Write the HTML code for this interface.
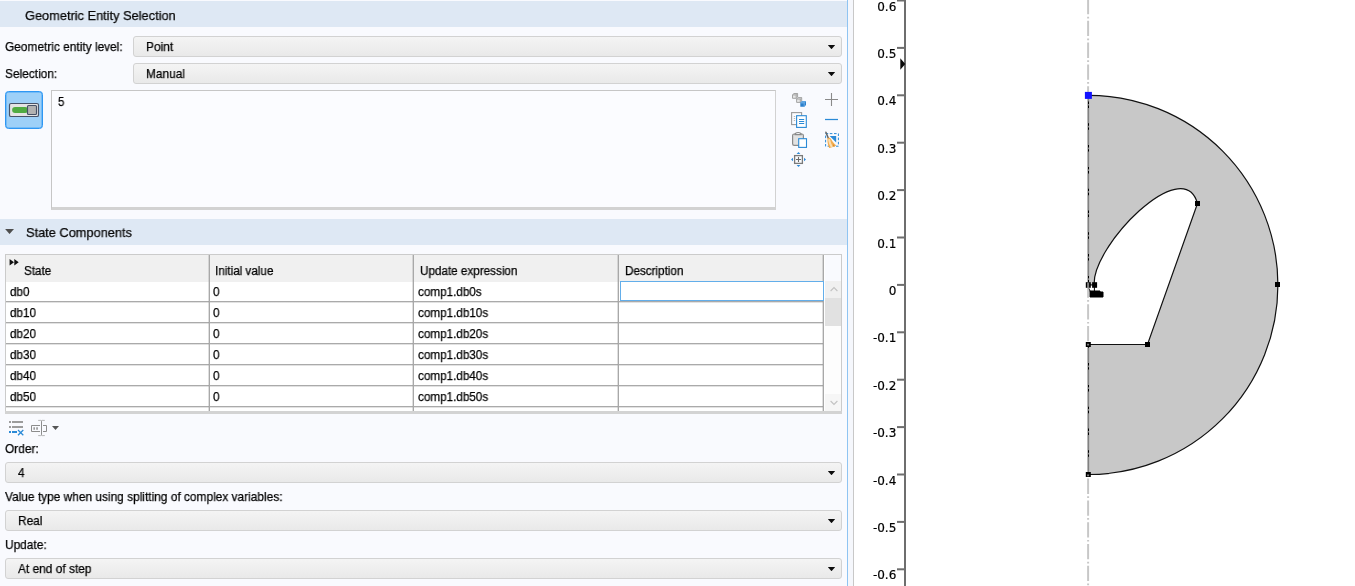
<!DOCTYPE html>
<html><head><meta charset="utf-8"><title>Settings</title>
<style>
*{box-sizing:border-box;margin:0;padding:0}
html,body{width:1355px;height:586px;overflow:hidden;background:#fff}
body{position:relative;font-family:"Liberation Sans",sans-serif;font-size:13px;color:#000}
.a{position:absolute}
.t{position:absolute;white-space:nowrap;transform:scaleX(.915);transform-origin:0 0;line-height:16px;will-change:transform;-webkit-text-stroke:.25px #000}
#left{position:absolute;left:0;top:0;width:847px;height:586px;background:#f9fafe}
.hdr{position:absolute;left:0;width:847px;height:26px;background:#dee8f4}
.hdr .t{font-size:13.4px;color:#0a0a0a;top:6.5px;transform:scaleX(.955)}
#tbl .t{font-size:12.3px;transform:scaleX(.95)}
.dd{position:absolute;height:21px;border:1px solid #d2d2d2;border-radius:3px;background:linear-gradient(#f4f4f4,#e9e9e9)}
.dd .t{top:2px;left:12px}
.dd i{position:absolute;right:5.8px;top:7.9px;width:7.4px;height:4.3px;background:#0c0c0c;clip-path:polygon(0 0,100% 0,50% 100%)}
</style></head><body>
<div id="left">
 <!-- section 1 -->
 <div class="hdr" style="top:1px"><span class="t" style="left:25px">Geometric Entity Selection</span></div>
 <span class="t" style="left:5px;top:39px">Geometric entity level:</span>
 <div class="dd" style="left:133px;top:36px;width:709px"><span class="t">Point</span><i></i></div>
 <span class="t" style="left:5px;top:66px">Selection:</span>
 <div class="dd" style="left:133px;top:63px;width:709px"><span class="t">Manual</span><i></i></div>

 <!-- toggle button -->
 <div class="a" id="tog" style="left:5px;top:91px;width:38px;height:38px;border:1px solid #2e97f3;border-radius:3.5px;background:#9dd0f8;box-shadow:inset 0 0 0 .5px #4aa6f5"></div>
 <svg class="a" style="left:5px;top:91px" width="38" height="38" viewBox="5 91 38 38">
  <rect x="9.5" y="103.5" width="29" height="13" rx="1.6" fill="#e4e4e4" stroke="#475268" stroke-width="1.15"/>
  <rect x="12.1" y="107" width="16" height="6" rx="3" fill="#50ab42"/>
  <rect x="27.5" y="105.5" width="9" height="9" rx="1" fill="#b2b2b2" stroke="#475268" stroke-width="1.15"/>
 </svg>
 <!-- list box -->
 <div class="a" style="left:51px;top:90px;width:725px;height:120px;background:#fbfcff;border:1px solid #c6c6c6;border-right-color:#d2d2d2;border-bottom:3px solid #d2d2d2"></div>
 <span class="t" style="left:58.3px;top:94.3px;font-size:12.4px">5</span>

<!-- icons -->
 <svg class="a" id="icons" style="left:786px;top:88px" width="60" height="84" viewBox="786 88 60 84">
  <!-- cubes -->
  <g fill="#e6e6e6" stroke="#a4a4a4" stroke-width="1">
   <path d="M792.5 94.8L794 93.5H797.6V97L796.2 98.3H792.5Z M792.5 94.9H796.2V98.3 M796.2 94.9L797.6 93.6"/>
   <path d="M796.6 98.9L798.1 97.6H801.7V101.1L800.3 102.4H796.6Z M796.6 99H800.3V102.4 M800.3 99L801.7 97.7"/>
  </g>
  <path d="M800.3 102.6L802.3 101H806V105L804.4 106.8H800.3Z" fill="#2b80cc"/><path d="M800.5 102.6L802.4 101.1H805.9L804.3 102.6Z" fill="#5ea6e4"/>
  <path d="M800.6 102.9H804.2V106.5 M804.2 102.9L805.8 101.3" fill="none" stroke="#7db8ea" stroke-width=".8"/>
  <!-- plus / minus -->
  <path d="M825 99.5H838M831.5 93V106" stroke="#8a8a8a" stroke-width="1.1" fill="none"/>
  <path d="M825 119.5H838" stroke="#2b8ad6" stroke-width="1.25" fill="none"/>
  <!-- copy -->
  <rect x="791.6" y="112.6" width="10" height="12" fill="#fbfcff" stroke="#9a9a9a" stroke-width="1.1"/>
  <path d="M793.8 116.5h1.4M793.8 118.5h1.4M793.8 120.5h1.4" stroke="#b8b8b8" stroke-width="1"/>
  <rect x="796.6" y="115.7" width="9.7" height="11.7" fill="#fff" stroke="#2b8ad6" stroke-width="1.1"/>
  <path d="M799 119.5h5.2M799 121.5h5.2M799 123.5h5.2" stroke="#2b8ad6" stroke-width="1"/>
  <!-- paste -->
  <rect x="792.6" y="134" width="10.8" height="11.4" rx="1.6" fill="#e2e2e2" stroke="#8a8a8a" stroke-width="1.2"/>
  <path d="M795 134.6C795 131.8 801.2 131.8 801.2 134.6Z" fill="#fbfcff" stroke="#8a8a8a" stroke-width="1.2"/>
  <rect x="798.7" y="138.7" width="7.8" height="8.7" fill="#fff" stroke="#2b8ad6" stroke-width="1.1"/>
  <!-- zoom to selection -->
  <rect x="794.6" y="155.6" width="7.8" height="7.8" fill="#fbfcff" stroke="#7a7a7a" stroke-width="1.3"/>
  <path d="M796 159.5h5M798.5 157v5" stroke="#6a6a6a" stroke-width="1.1" fill="none"/>
  <path d="M796.6 153.9L798.5 151.9L800.4 153.9Z M796.6 165.1L798.5 167.1L800.4 165.1Z M793 157.7L791 159.5L793 161.3Z M804 157.7L806 159.5L804 161.3Z" fill="#2f8ad8"/>
  <!-- clear selection (broom) -->
  <rect x="825.6" y="133.6" width="12.8" height="12.6" fill="none" stroke="#2b8ad6" stroke-width="1" stroke-dasharray="2.6 1.6"/>
  <path d="M829.7 135.9H836.2V142.6Z" fill="#2b8ad6"/>
  <path d="M825.9 132.3L828.4 138.4" stroke="#666" stroke-width="1.5" stroke-linecap="round"/>
  <path d="M828.2 137.8C829.6 137.5 830.8 138.2 831.3 139.4C832.6 141.8 834.4 143.8 836.3 145.4C835 146.3 833.6 146.7 832.6 147.1C831.4 147.6 830.2 148.1 829.2 147.9C828 145.4 827.3 141.8 827.4 139.4C827.5 138.5 827.7 138 828.2 137.8Z" fill="#f3ad50"/>
  <path d="M829.2 140C829.6 142.4 830.4 144.8 831.6 146.6" stroke="#fadfb4" stroke-width="2" fill="none" stroke-linecap="round"/>
  <path d="M833 144.8L834.4 145.9" stroke="#c9781c" stroke-width=".9"/>
 </svg>

 <!-- section 2 -->
 <div class="hdr" style="top:219px"><span class="t" style="left:26px;top:5.5px">State Components</span>
  <i class="a" style="left:5.1px;top:10px;width:8.9px;height:5.1px;background:#4e4e4e;clip-path:polygon(0 0,100% 0,50% 100%)"></i></div>

 <!-- table -->
 <div class="a" id="tbl" style="left:5px;top:254px;width:837px;height:160px;border:1px solid #cbcbcb;border-bottom:0;background:#fff">
  <div class="a" style="left:0;top:0;width:818px;height:27px;background:#f0f0f0"></div>
  <div class="a" style="left:819px;top:0;width:16px;height:26px;background:#f9fafe"></div>
  <svg class="a" style="left:3px;top:4px" width="11" height="8" viewBox="0 0 11 8"><path d="M0.6 0L5 3.3L0.6 6.6Z M5.3 0L9.7 3.3L5.3 6.6Z" fill="#111"/></svg>
  <span class="t" style="left:18px;top:8px">State</span>
  <span class="t" style="left:209px;top:8px">Initial value</span>
  <span class="t" style="left:414px;top:8px">Update expression</span>
  <span class="t" style="left:619px;top:8px">Description</span>
  <span class="t" style="left:3.5px;top:29px">db0</span><span class="t" style="left:207px;top:29px">0</span><span class="t" style="left:412px;top:29px">comp1.db0s</span>
  <div class="a" style="left:0;top:46px;width:818px;height:2px;background:linear-gradient(#aaa,#aaa 50%,rgba(150,150,150,.28) 50%)"></div>
  <span class="t" style="left:3.5px;top:50px">db10</span><span class="t" style="left:207px;top:50px">0</span><span class="t" style="left:412px;top:50px">comp1.db10s</span>
  <div class="a" style="left:0;top:67px;width:818px;height:2px;background:linear-gradient(#aaa,#aaa 50%,rgba(150,150,150,.28) 50%)"></div>
  <span class="t" style="left:3.5px;top:71px">db20</span><span class="t" style="left:207px;top:71px">0</span><span class="t" style="left:412px;top:71px">comp1.db20s</span>
  <div class="a" style="left:0;top:88px;width:818px;height:2px;background:linear-gradient(#aaa,#aaa 50%,rgba(150,150,150,.28) 50%)"></div>
  <span class="t" style="left:3.5px;top:92px">db30</span><span class="t" style="left:207px;top:92px">0</span><span class="t" style="left:412px;top:92px">comp1.db30s</span>
  <div class="a" style="left:0;top:109px;width:818px;height:2px;background:linear-gradient(#aaa,#aaa 50%,rgba(150,150,150,.28) 50%)"></div>
  <span class="t" style="left:3.5px;top:113px">db40</span><span class="t" style="left:207px;top:113px">0</span><span class="t" style="left:412px;top:113px">comp1.db40s</span>
  <div class="a" style="left:0;top:130px;width:818px;height:2px;background:linear-gradient(#aaa,#aaa 50%,rgba(150,150,150,.28) 50%)"></div>
  <span class="t" style="left:3.5px;top:134px">db50</span><span class="t" style="left:207px;top:134px">0</span><span class="t" style="left:412px;top:134px">comp1.db50s</span>
  <div class="a" style="left:0;top:151px;width:818px;height:2px;background:linear-gradient(#aaa,#aaa 50%,rgba(150,150,150,.28) 50%)"></div>
  <div class="a" style="left:202px;top:0;width:2px;height:156px;background:linear-gradient(90deg,rgba(150,150,150,.3),rgba(150,150,150,.3) 50%,#a8a8a8 50%)"></div>
  <div class="a" style="left:406px;top:0;width:2px;height:156px;background:linear-gradient(90deg,rgba(150,150,150,.3),rgba(150,150,150,.3) 50%,#a8a8a8 50%)"></div>
  <div class="a" style="left:611px;top:0;width:2px;height:156px;background:linear-gradient(90deg,rgba(150,150,150,.3),rgba(150,150,150,.3) 50%,#a8a8a8 50%)"></div>
  <div class="a" style="left:816px;top:0;width:2px;height:156px;background:linear-gradient(90deg,rgba(150,150,150,.3),rgba(150,150,150,.3) 50%,#a8a8a8 50%)"></div>
  <div class="a" style="left:614px;top:26px;width:204px;height:20px;border:1px solid #63aeea;background:#fff"></div>
  <div class="a" style="left:819px;top:26px;width:16px;height:130px;background:#fdfdfd"></div>
  <div class="a" style="left:819px;top:26px;width:16px;height:17px;background:#f0f0f0"></div>
  <div class="a" style="left:819px;top:43px;width:16px;height:28px;background:#e1e1e1"></div>
  <svg class="a" style="left:823.5px;top:31px" width="8" height="6" viewBox="0 0 8 6"><path d="M0.6 5L4 1.6L7.4 5" fill="none" stroke="#c2c2c2" stroke-width="1.1"/></svg>
  <div class="a" style="left:819px;top:139px;width:16px;height:17px;background:#f6f6f6"></div>
  <svg class="a" style="left:823.5px;top:144.5px" width="8" height="6" viewBox="0 0 8 6"><path d="M0.6 1L4 4.4L7.4 1" fill="none" stroke="#c2c2c2" stroke-width="1.1"/></svg>
  <div class="a" style="left:-1px;top:156px;width:837px;height:3px;background:#d3d3d3"></div>
 </div>

<!-- table toolbar -->
 <svg class="a" id="tb" style="left:0;top:414px" width="70" height="28" viewBox="0 414 70 28">
  <path d="M9 422h2M12 422h11M9 427h2M12 427h11" stroke="#9c9c9c" stroke-width="2" fill="none"/>
  <path d="M9 432h2M12 432h5" stroke="#2b8ad6" stroke-width="2" fill="none"/>
  <path d="M18 430L23.3 435.2M23.3 430L18 435.2" stroke="#2b8ad6" stroke-width="1.3" fill="none"/>
  <path d="M40 425.5H31.5V431.5H40M43 425.5H46.5V431.5H43" stroke="#8c8c8c" stroke-width="1" fill="none"/>
  <path d="M33.4 427.2h1.6v2.6h-1.6zM36.2 427.2h1.7v2.6h-1.7z" fill="#9a9a9a"/>
  <path d="M41.5 420.6V435.4" stroke="#8c8c8c" stroke-width="1" fill="none"/>
  <path d="M38.2 420.4h2.6l0.7 0.5l0.7-0.5h2.6M38.2 435.6h2.6l0.7-0.5l0.7 0.5h2.6" stroke="#b4b4b4" stroke-width="1" fill="none"/>
  <path d="M52 426H59L55.5 430Z" fill="#555"/>
 </svg>

 <!-- order etc -->
 <span class="t" style="left:5px;top:441px">Order:</span>
 <div class="dd" style="left:5px;top:462px;width:837px"><span class="t">4</span><i></i></div>
 <span class="t" style="left:5px;top:489px">Value type when using splitting of complex variables:</span>
 <div class="dd" style="left:5px;top:510px;width:837px"><span class="t">Real</span><i></i></div>
 <span class="t" style="left:5px;top:537px">Update:</span>
 <div class="dd" style="left:5px;top:558px;width:837px"><span class="t">At end of step</span><i></i></div>
</div>
<!-- splitter -->
<div class="a" style="left:847px;top:0;width:1px;height:586px;background:#8fc4f2"></div>
<div class="a" style="left:848px;top:0;width:5px;height:586px;background:#f5f7fc"></div>
<div class="a" style="left:853px;top:0;width:1px;height:586px;background:#c8c8c8"></div>
<!-- graphics -->
<svg class="a" id="gfx" style="left:854px;top:0;will-change:transform" width="501" height="586" viewBox="854 0 501 586" font-family="'DejaVu Sans',sans-serif" font-size="12">
 <rect x="904" y="0" width="2" height="586" fill="#6e6e6e"/>
 <rect x="897" y="-0.50" width="8" height="2" fill="#6e6e6e"/><text x="896.3" y="10.50" text-anchor="end" fill="#000" stroke="#000" stroke-width=".2">0.6</text>
 <rect x="897" y="46.90" width="8" height="2" fill="#6e6e6e"/><text x="896.3" y="57.90" text-anchor="end" fill="#000" stroke="#000" stroke-width=".2">0.5</text>
 <rect x="897" y="94.30" width="8" height="2" fill="#6e6e6e"/><text x="896.3" y="105.30" text-anchor="end" fill="#000" stroke="#000" stroke-width=".2">0.4</text>
 <rect x="897" y="141.70" width="8" height="2" fill="#6e6e6e"/><text x="896.3" y="152.70" text-anchor="end" fill="#000" stroke="#000" stroke-width=".2">0.3</text>
 <rect x="897" y="189.10" width="8" height="2" fill="#6e6e6e"/><text x="896.3" y="200.10" text-anchor="end" fill="#000" stroke="#000" stroke-width=".2">0.2</text>
 <rect x="897" y="236.50" width="8" height="2" fill="#6e6e6e"/><text x="896.3" y="247.50" text-anchor="end" fill="#000" stroke="#000" stroke-width=".2">0.1</text>
 <rect x="897" y="283.90" width="8" height="2" fill="#6e6e6e"/><text x="896.3" y="294.90" text-anchor="end" fill="#000" stroke="#000" stroke-width=".2">0</text>
 <rect x="897" y="331.30" width="8" height="2" fill="#6e6e6e"/><text x="896.3" y="342.30" text-anchor="end" fill="#000" stroke="#000" stroke-width=".2">-0.1</text>
 <rect x="897" y="378.70" width="8" height="2" fill="#6e6e6e"/><text x="896.3" y="389.70" text-anchor="end" fill="#000" stroke="#000" stroke-width=".2">-0.2</text>
 <rect x="897" y="426.10" width="8" height="2" fill="#6e6e6e"/><text x="896.3" y="437.10" text-anchor="end" fill="#000" stroke="#000" stroke-width=".2">-0.3</text>
 <rect x="897" y="473.50" width="8" height="2" fill="#6e6e6e"/><text x="896.3" y="484.50" text-anchor="end" fill="#000" stroke="#000" stroke-width=".2">-0.4</text>
 <rect x="897" y="520.90" width="8" height="2" fill="#6e6e6e"/><text x="896.3" y="531.90" text-anchor="end" fill="#000" stroke="#000" stroke-width=".2">-0.5</text>
 <rect x="897" y="568.30" width="8" height="2" fill="#6e6e6e"/><text x="896.3" y="579.30" text-anchor="end" fill="#000" stroke="#000" stroke-width=".2">-0.6</text>
 <path d="M900.3 58.3L905.3 64L900.3 69.7Z" fill="#0a0a0a"/>
 <path d="M1088.4 95.3L1088.4 284.9L1094.3 285C1091.0 247.0 1183.1 152.3 1197.5 203.5L1147.5 344.5L1088.4 344.5L1088.4 474.5A189.6 189.6 0 0 0 1088.4 95.3Z" fill="#c8c8c8"/>
 <path d="M1088.4 474.5A189.6 189.6 0 0 0 1088.4 95.3" fill="none" stroke="#111" stroke-width="1.2"/>
 <path d="M1088.4 284.9L1094.3 285C1091.0 247.0 1183.1 152.3 1197.5 203.5L1147.5 344.5L1088.4 344.5" fill="none" stroke="#111" stroke-width="1.2"/>
 <path d="M1088.4 95.3L1088.4 284.9M1088.4 344.5L1088.4 474.5" stroke="#000" stroke-width="1.3" fill="none"/>
 <rect x="1085.8" y="282.2" width="5" height="5.6" fill="#000"/><rect x="1092.1" y="282.2" width="5" height="5.6" fill="#000"/><rect x="1195.0" y="201.0" width="5" height="5" fill="#000"/><rect x="1275.0" y="282.0" width="5" height="5" fill="#000"/><rect x="1145.0" y="342.0" width="5" height="5" fill="#000"/><rect x="1085.8" y="342.0" width="5" height="5" fill="#000"/><rect x="1085.8" y="472.0" width="5" height="5" fill="#000"/>
 <path d="M1090 291h10v1h3v5h-13zM1088.3 287.5L1091 293M1094.4 287v5" fill="#000" stroke="#000" stroke-width="1"/>
 <line x1="1088.1" y1="-1" x2="1088.1" y2="586" stroke="#b2b2b2" stroke-opacity=".72" stroke-width="2" stroke-dasharray="15.3 2.4 1.7 2.4"/>
 <rect x="1084.9" y="91.9" width="7" height="7" fill="#1212ff"/>
</svg>
</body></html>
